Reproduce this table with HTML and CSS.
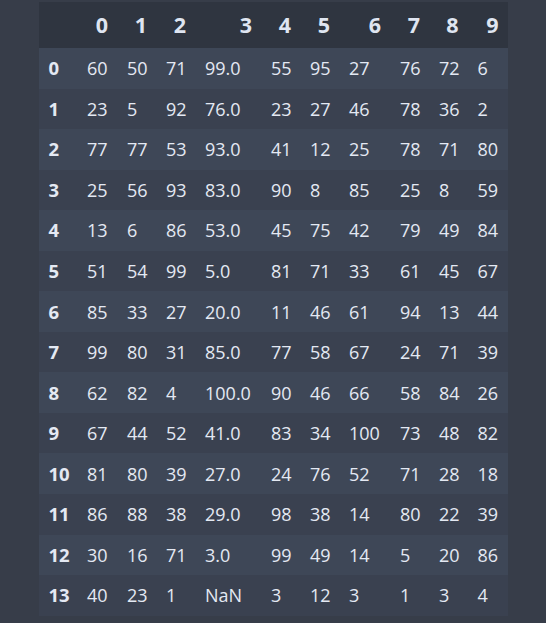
FILE: index.html
```html
<!DOCTYPE html>
<html>
<head>
<meta charset="utf-8">
<link rel="stylesheet" href="styles.css">
</head>
<body>
<table class="df">
<colgroup>
<col class="w-idx"><col class="w-c0"><col class="w-c1"><col class="w-c2"><col class="w-c3"><col class="w-c4"><col class="w-c5"><col class="w-c6"><col class="w-c7"><col class="w-c8"><col class="w-c9">
</colgroup>
<thead>
<tr><th></th><th>0</th><th>1</th><th>2</th><th>3</th><th>4</th><th>5</th><th>6</th><th>7</th><th>8</th><th>9</th></tr>
</thead>
<tbody>
<tr><th>0</th><td>60</td><td>50</td><td>71</td><td>99.0</td><td>55</td><td>95</td><td>27</td><td>76</td><td>72</td><td>6</td></tr>
<tr><th>1</th><td>23</td><td>5</td><td>92</td><td>76.0</td><td>23</td><td>27</td><td>46</td><td>78</td><td>36</td><td>2</td></tr>
<tr><th>2</th><td>77</td><td>77</td><td>53</td><td>93.0</td><td>41</td><td>12</td><td>25</td><td>78</td><td>71</td><td>80</td></tr>
<tr><th>3</th><td>25</td><td>56</td><td>93</td><td>83.0</td><td>90</td><td>8</td><td>85</td><td>25</td><td>8</td><td>59</td></tr>
<tr><th>4</th><td>13</td><td>6</td><td>86</td><td>53.0</td><td>45</td><td>75</td><td>42</td><td>79</td><td>49</td><td>84</td></tr>
<tr><th>5</th><td>51</td><td>54</td><td>99</td><td>5.0</td><td>81</td><td>71</td><td>33</td><td>61</td><td>45</td><td>67</td></tr>
<tr><th>6</th><td>85</td><td>33</td><td>27</td><td>20.0</td><td>11</td><td>46</td><td>61</td><td>94</td><td>13</td><td>44</td></tr>
<tr><th>7</th><td>99</td><td>80</td><td>31</td><td>85.0</td><td>77</td><td>58</td><td>67</td><td>24</td><td>71</td><td>39</td></tr>
<tr><th>8</th><td>62</td><td>82</td><td>4</td><td>100.0</td><td>90</td><td>46</td><td>66</td><td>58</td><td>84</td><td>26</td></tr>
<tr><th>9</th><td>67</td><td>44</td><td>52</td><td>41.0</td><td>83</td><td>34</td><td>100</td><td>73</td><td>48</td><td>82</td></tr>
<tr><th>10</th><td>81</td><td>80</td><td>39</td><td>27.0</td><td>24</td><td>76</td><td>52</td><td>71</td><td>28</td><td>18</td></tr>
<tr><th>11</th><td>86</td><td>88</td><td>38</td><td>29.0</td><td>98</td><td>38</td><td>14</td><td>80</td><td>22</td><td>39</td></tr>
<tr><th>12</th><td>30</td><td>16</td><td>71</td><td>3.0</td><td>99</td><td>49</td><td>14</td><td>5</td><td>20</td><td>86</td></tr>
<tr><th>13</th><td>40</td><td>23</td><td>1</td><td>NaN</td><td>3</td><td>12</td><td>3</td><td>1</td><td>3</td><td>4</td></tr>
</tbody>
</table>
</body>
</html>
```
FILE: styles.css
```css
html, body {
  margin: 0;
  padding: 0;
  background: #373d49;
}
body {
  padding: 2px 0 0 39px;
  font-family: "Open Sans", "Noto Sans", sans-serif;
  font-size: 18px;
  color: #e4e9f3;
}
.df {
  border-collapse: collapse;
  border-spacing: 0;
  table-layout: fixed;
  width: 469px;
}
.w-idx { width: 38.5px; }
.w-c0 { width: 40px; }
.w-c1 { width: 39px; }
.w-c2 { width: 39px; }
.w-c3 { width: 66px; }
.w-c4 { width: 39px; }
.w-c5 { width: 39px; }
.w-c6 { width: 51px; }
.w-c7 { width: 39px; }
.w-c8 { width: 38.5px; }
.w-c9 { width: 40px; }
.df th, .df td {
  padding: 0 9.5px;
  white-space: nowrap;
  vertical-align: middle;
  line-height: 24px;
}
.df thead tr {
  background: #2f3540;
  height: 46px;
}
.df thead th {
  text-align: right;
  font-weight: 700;
  font-size: 21.5px;
  color: #dfe5f1;
}
.df tbody tr {
  height: 40.55px;
  background: #3a4150;
}
.df tbody tr:nth-child(odd) {
  background: #3e4757;
}
.df tbody th {
  text-align: left;
  font-weight: 700;
  font-size: 18.5px;
  color: #e4e9f3;
}
.df tbody td {
  text-align: left;
}
```
